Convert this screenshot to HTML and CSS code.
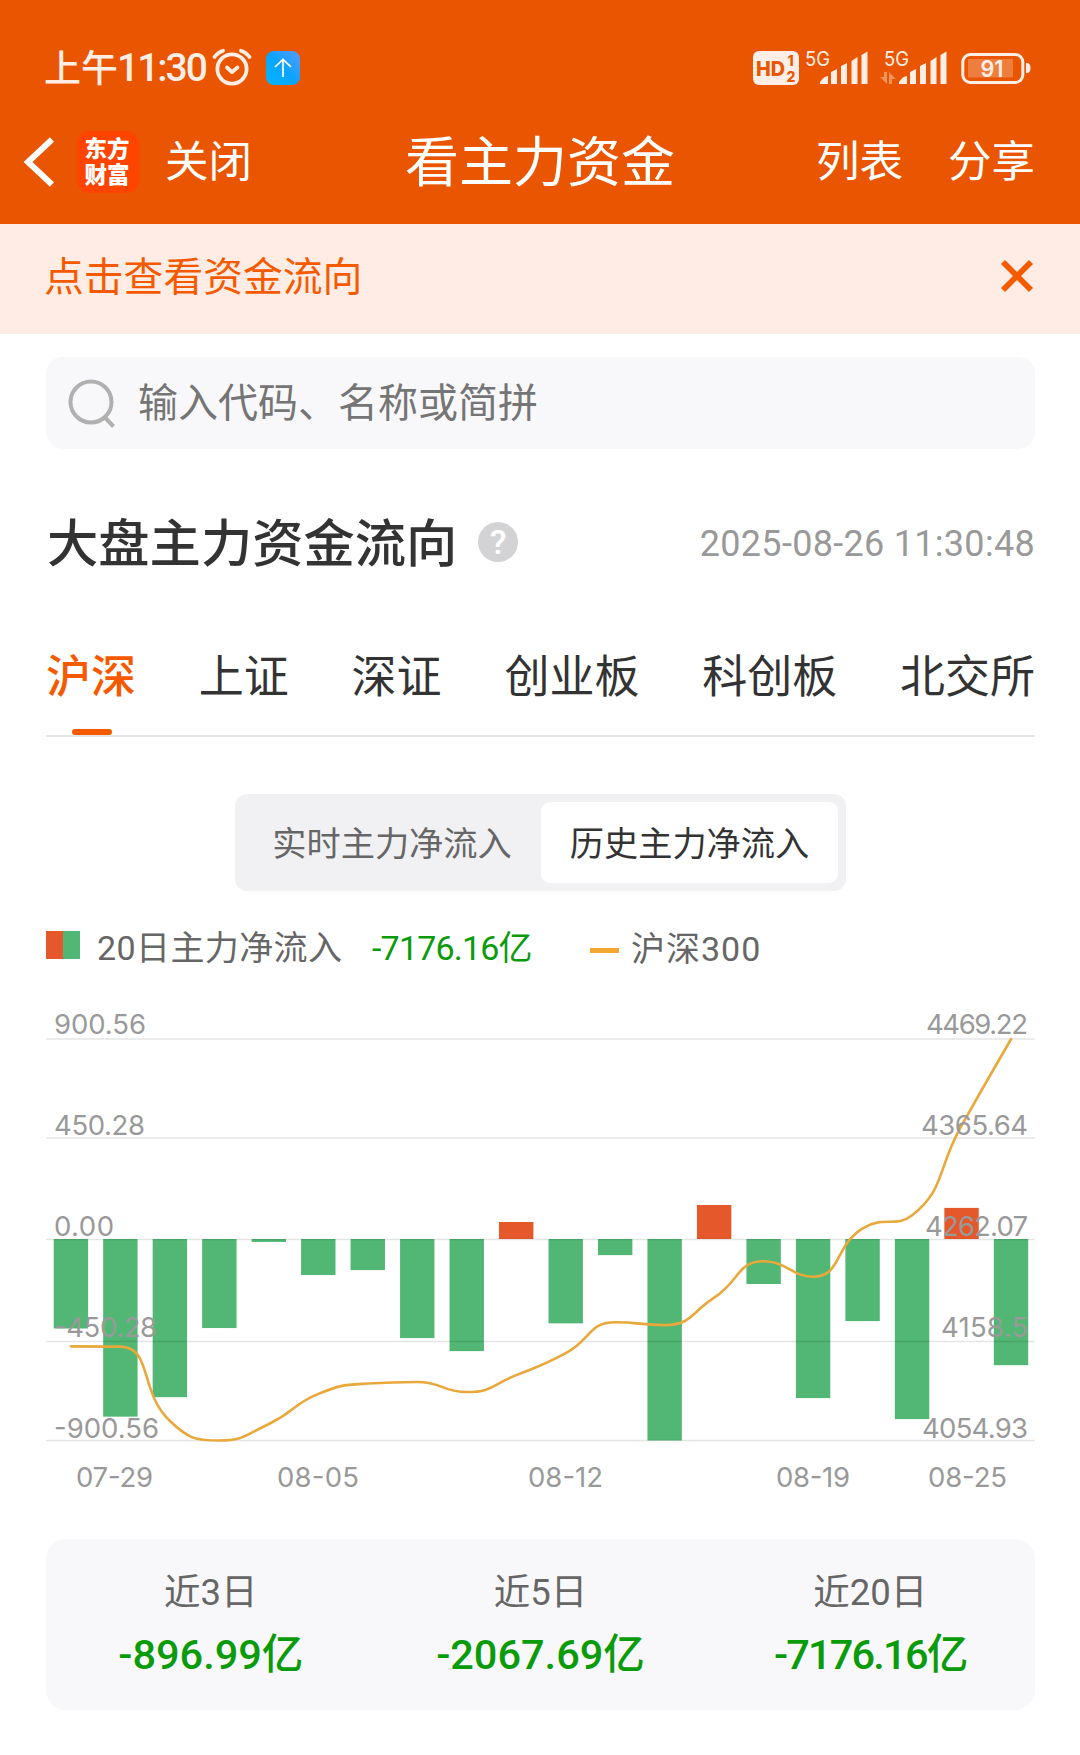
FILE: index.html
```html
<!DOCTYPE html>
<html lang="zh-CN">

<head>
  <meta charset="UTF-8" />
  <meta name="viewport" content="width=device-width, initial-scale=1.0" />
  <title>看主力资金</title>
  <link rel="stylesheet" href="styles.css">
</head>

<body>

  <!-- Header -->
  <header class="header">
    <div class="status-bar">
      <div class="status-left">
        <span class="status-day">上午</span><span class="status-time">11:30</span>
        <svg class="alarm" width="42" height="40" viewBox="0 0 42 40" fill="none" stroke="#ffeee5" stroke-width="3.8" stroke-linecap="round" stroke-linejoin="round">
          <circle cx="21" cy="22" r="14.6" />
          <path d="M3.5 10 Q7 5 12 3.8M38.5 10 Q35 5 30 3.8M16 20.5l5 4.6 5.5-4.6" />
        </svg>
        <svg class="upload" width="34" height="34" viewBox="0 0 34 34">
          <defs>
            <linearGradient id="blue" x1="0" y1="1" x2="1" y2="0">
              <stop offset="0" stop-color="#00b7ff" />
              <stop offset="0.5" stop-color="#0ba3ff" />
              <stop offset="1" stop-color="#5a9cff" />
            </linearGradient>
          </defs>
          <rect width="34" height="34" rx="8" fill="url(#blue)" />
          <path d="M17 26V8.5M9 16l8-7.5 8 7.5" fill="none" stroke="#fff" stroke-width="1.7" />
        </svg>
      </div>
      <svg class="status-icons" width="280" height="44" viewBox="0 -4 280 44" fill="#ffeee5">
        <rect x="1" y="1" width="46" height="34" rx="6" />
        <g fill="#e95500" font-weight="800">
          <text x="4" y="25.5" font-size="20.5" textLength="29" lengthAdjust="spacingAndGlyphs">HD</text>
          <text x="35.5" y="15.5" font-size="14">1</text>
          <text x="34.5" y="31.5" font-size="14" textLength="9.5">2</text>
        </g>
        <text x="53" y="16" font-size="20" textLength="25" lengthAdjust="spacingAndGlyphs">5G</text>
        <g id="signal">
          <path d="M68 34v-2q4-6 8-6v8zM79 34V22l6-3v15zM89 34V16l6-3v21zM99.5 34V11l6-4v27zM109.5 34V5l6-3.5V34z" />
        </g>
        <text x="132" y="16" font-size="20" textLength="25" lengthAdjust="spacingAndGlyphs">5G</text>
        <use href="#signal" x="79" />
        <path d="M128 27h4v-5h3v12zM137 34V22l7 7h-4v5z" opacity=".4" />
        <rect x="210.8" y="4.5" width="60" height="28" rx="7.5" fill="none" stroke="#ffeee5" stroke-width="3" />
        <rect x="216" y="9" width="45" height="18.5" rx="1" opacity=".27" />
        <path d="M274 13h2q2.5 1 2.5 5t-2.5 5h-2z" />
        <text x="228.5" y="26.5" font-size="22.5" font-weight="600" textLength="23" lengthAdjust="spacingAndGlyphs">91</text>
      </svg>
    </div>

    <nav class="navbar">
      <div class="nav-left">
        <svg class="back" width="32" height="52" viewBox="0 0 32 52" fill="none" stroke="#fff" stroke-width="6">
          <path d="M30 3.5 6 26l24 22.5" />
        </svg>
        <div class="logo"><span>东方</span><span>财富</span></div>
        <span class="nav-link">关闭</span>
      </div>
      <h1>看主力资金</h1>
      <div class="nav-right">
        <span class="nav-link">列表</span>
        <span class="nav-link">分享</span>
      </div>
    </nav>
  </header>

  <!-- Notice -->
  <div class="notice">
    <span>点击查看资金流向</span>
    <svg width="34" height="34" viewBox="0 0 34 34" stroke="#f65a00" stroke-width="5.8">
      <path d="M3 3l28 28M31 3L3 31" />
    </svg>
  </div>

  <main class="content">
    <!-- Search Bar -->
    <div class="search-bar">
      <svg width="48" height="50" viewBox="0 0 48 50" fill="none" stroke="#b0b0b0" stroke-width="4">
        <circle cx="23" cy="24" r="20.5" />
        <path d="M36.5 39l9 9.5" />
      </svg>
      <span>输入代码、名称或简拼</span>
    </div>

    <div class="section-title">
      <h2>大盘主力资金流向</h2>
      <span class="help">?</span>
      <time>2025-08-26 11:30:48</time>
    </div>

    <!-- Tabs -->
    <div class="tabs">
      <span class="tab active">沪深</span>
      <span class="tab">上证</span>
      <span class="tab">深证</span>
      <span class="tab">创业板</span>
      <span class="tab">科创板</span>
      <span class="tab">北交所</span>
    </div>

    <div class="switch">
      <span class="switch-item">实时主力净流入</span>
      <span class="switch-item active">历史主力净流入</span>
    </div>

    <div class="legend">
      <span class="swatch"></span>
      <span class="legend-name">20日主力净流入</span>
      <span class="legend-value">-7176.16亿</span>
      <span class="dash"></span>
      <span class="legend-index">沪深300</span>
    </div>

    <!-- Chart -->
    <svg class="chart" width="989" height="520" viewBox="46 0 989 520">
      <g id="bars"></g>
      <g class="grid">
        <path d="M46 49H1035M46 148H1035M46 249.5H1035M46 351.5H1035M46 450.5H1035" />
      </g>
      <path id="indexLine" class="index-line" />
      <g class="axis">
        <text x="54" y="44" textLength="92">900.56</text>
        <text x="54" y="145" textLength="91">450.28</text>
        <text x="54" y="246" textLength="60">0.00</text>
        <text x="54" y="347" textLength="103">-450.28</text>
        <text x="54" y="448" textLength="105">-900.56</text>
        <text x="926" y="44" textLength="102">4469.22</text>
        <text x="921" y="145" textLength="107">4365.64</text>
        <text x="925" y="246" textLength="103">4262.07</text>
        <text x="941" y="347" textLength="87">4158.5</text>
        <text x="922" y="448" textLength="106">4054.93</text>
        <text x="76" y="497" textLength="77">07-29</text>
        <text x="277" y="497" textLength="82">08-05</text>
        <text x="528" y="497" textLength="75">08-12</text>
        <text x="776" y="497" textLength="74">08-19</text>
        <text x="928" y="497" textLength="79">08-25</text>
      </g>
    </svg>

    <!-- Summary -->
    <div class="summary">
      <div class="summary-item"><span>近3日</span><strong>-896.99亿</strong></div>
      <div class="summary-item"><span>近5日</span><strong>-2067.69亿</strong></div>
      <div class="summary-item"><span>近20日</span><strong class="tight">-7176.16亿</strong></div>
    </div>
  </main>

  <script src="chart.js"></script>
</body>

</html>
```
FILE: styles.css
```css
* {
  box-sizing: border-box;
}

body {
  margin: 0;
  background: #fff;
  color: #333;
  font-family: Roboto, "Noto Sans CJK SC", sans-serif;
}

h1,
h2 {
  margin: 0;
  font-weight: 400;
}

span,
time,
h1,
h2 {
  white-space: nowrap;
}

svg {
  flex-shrink: 0;
}

/* Header */
.header {
  height: 224px;
  background: #e95500;
  color: #fff;
}

.status-bar {
  display: flex;
  justify-content: space-between;
  align-items: center;
  height: 114px;
  padding: 22px 48px 0 44px;
  color: #ffeee5;
}

.status-icons text {
  font-family: Inter, sans-serif;
}

.status-left {
  display: flex;
  align-items: center;
  font-size: 37px;
  font-weight: 500;
}

.status-day {
  padding-bottom: 4px;
}

.status-time {
  margin-left: -1px;
  font-size: 39px;
  letter-spacing: -2px;
}

.alarm {
  margin-left: 5px;
  margin-bottom: 3px;
}

.upload {
  margin-left: 13px;
  margin-bottom: 1px;
}

.navbar {
  display: flex;
  align-items: center;
  height: 96px;
  padding: 0 45px 0 22px;
}

.navbar h1 {
  padding-bottom: 7px;
  font-size: 54px;
}

.nav-left,
.nav-right {
  display: flex;
  align-items: center;
  flex: 1;
}

.nav-left {
  margin-right: 23px;
}

.nav-right {
  justify-content: flex-end;
  gap: 45px;
}

.nav-link {
  padding-bottom: 7px;
  font-size: 43.5px;
}

.logo {
  display: flex;
  flex-direction: column;
  justify-content: center;
  align-items: center;
  width: 62px;
  height: 62px;
  margin: 0 26px 0 23px;
  padding-right: 2px;
  border-radius: 13px;
  background: #ff4400;
  font-size: 22.5px;
  font-weight: 900;
  line-height: 26px;
}

/* Notice */
.notice {
  display: flex;
  justify-content: space-between;
  align-items: center;
  height: 110px;
  padding: 0 46px 7px 44px;
  background: #ffede5;
  color: #f65a00;
  font-size: 39.8px;
}

.notice span {
  padding-bottom: 5px;
}

.content {
  padding: 23px 45px 0 46px;
}

.search-bar {
  display: flex;
  align-items: center;
  height: 92px;
  padding-left: 22px;
  border-radius: 17px;
  background: #f8f8fa;
  color: #757575;
  font-size: 40px;
}

.search-bar span {
  margin-left: 22px;
  padding-bottom: 7px;
}

.section-title {
  display: flex;
  align-items: center;
  height: 80px;
  margin-top: 53px;
}

.section-title h2 {
  padding-left: 1px;
  padding-bottom: 6px;
  font-size: 51.3px;
  font-weight: 500;
}

.section-title time {
  margin-left: auto;
  padding-top: 3px;
  color: #999;
  font-size: 36px;
  letter-spacing: 0.3px;
}

.help {
  width: 40px;
  height: 40px;
  margin-left: 21px;
  border-radius: 50%;
  background: #d3d3d5;
  color: #fff;
  font-size: 34px;
  font-weight: 500;
  line-height: 41px;
  text-align: center;
}

/* Tabs */
.tabs {
  display: flex;
  justify-content: space-between;
  height: 118px;
  margin-top: 37px;
  border-bottom: 2px solid #e5e5e5;
}

.tab {
  height: 116px;
  font-size: 45px;
  line-height: 118px;
}

.tab.active {
  position: relative;
  color: #f65a00;
  font-weight: 500;
}

.tab.active::after {
  content: "";
  position: absolute;
  bottom: 0;
  left: 26px;
  width: 40px;
  height: 6px;
  border-radius: 3px;
  background: #f65a00;
}

.switch {
  display: grid;
  grid-template-columns: 298px 297px;
  width: 611px;
  height: 97px;
  margin: 57px auto 0;
  padding: 8px;
  border-radius: 12px;
  background: #f1f1f3;
}

.switch-item {
  height: 81px;
  border-radius: 9px;
  color: #666;
  font-size: 34.2px;
  line-height: 84px;
  text-align: center;
}

.switch-item.active {
  background: #fff;
  color: #333;
}

/* Legend */
.legend {
  display: flex;
  align-items: center;
  height: 60px;
  margin-top: 24px;
  color: #666;
  font-size: 34px;
}

.swatch {
  width: 34px;
  height: 28px;
  margin-right: 17px;
  background: linear-gradient(90deg, #e5582b 50%, #52b774 50%);
}

.legend-name {
  width: 246px;
  letter-spacing: 0.4px;
}

.legend-value {
  width: 160px;
  margin-left: 29px;
  color: #0a9b0a;
  letter-spacing: -0.8px;
}

.dash {
  width: 29px;
  height: 5px;
  margin: 10px 12px 0 58px;
  background: #f5a630;
}

.legend-index {
  padding-top: 2px;
  letter-spacing: 1px;
}

/* Chart */
.chart {
  display: block;
  margin-top: 15px;
}

.grid path {
  fill: none;
  stroke: #000;
  stroke-opacity: 0.1;
  stroke-width: 1.5;
}

.index-line {
  fill: none;
  stroke: #e9a83b;
  stroke-width: 2.6;
  stroke-linecap: round;
}

.axis text {
  fill: #999;
  font-family: Inter, sans-serif;
  font-size: 27.5px;
}

.summary {
  display: grid;
  grid-template-columns: repeat(3, 1fr);
  height: 171px;
  margin-top: 29px;
  border-radius: 20px;
  background: #f8f8fa;
}

.summary-item {
  display: flex;
  flex-direction: column;
  align-items: center;
  padding-top: 23px;
}

.summary-item span {
  color: #666;
  font-size: 36.5px;
  line-height: 62px;
}

.summary-item strong {
  color: #0a9b0a;
  font-size: 41.5px;
  font-weight: 500;
  line-height: 62px;
}

.summary-item .tight {
  letter-spacing: -1.8px;
}
```
FILE: chart.js
```js
const inflow = [-400, -794, -707, -398, -13, -161, -139, -443, -501, 76,
  -377, -72, -900.56, 152, -201, -711, -367, -805, 139, -564];

const csi300 = [4152.1, 4151.8, 4075, 4054.93, 4072, 4103, 4113.7, 4115.3, 4104.9, 4122.4,
  4145, 4177, 4174, 4202.3, 4239.9, 4223.9, 4273.9, 4287.3, 4380, 4469.22];

const zeroY = 249;
const step = 49.48;

// bars
document.getElementById('bars').innerHTML = inflow.map((v, i) => {
  const h = Math.abs(v) / 900.56 * 201.5;
  const y = v > 0 ? zeroY - h : zeroY;
  return `<rect x="${53.7 + i * step}" y="${y}" width="34.4" height="${h}" fill="${v > 0 ? '#e5582b' : '#52b774'}" />`;
}).join('');

// smooth index line
const pts = csi300.map((v, i) => [71 + i * step, 450.5 - (v - 4054.93) / (4469.22 - 4054.93) * 401.5]);

function clamp(v, a, b) {
  return Math.max(Math.min(a, b), Math.min(Math.max(a, b), v));
}

let d = `M${pts[0]}`;
let out = pts[0];
for (let i = 1; i < pts.length; i++) {
  const prev = pts[i - 1];
  const cur = pts[i];
  const next = pts[i + 1];
  let cpIn = cur;
  let cpOut = cur;
  if (next) {
    const lp = Math.hypot(cur[0] - prev[0], cur[1] - prev[1]);
    const ln = Math.hypot(next[0] - cur[0], next[1] - cur[1]);
    const r = ln / (ln + lp);
    cpOut = cur.map((c, k) => clamp(c + (next[k] - prev[k]) * 0.5 * r, c, next[k]));
    cpIn = cur.map((c, k) => clamp(c - (cpOut[k] - c) * lp / ln, prev[k], c));
    cpOut = cur.map((c, k) => c + (c - cpIn[k]) * ln / lp);
  }
  d += `C${out} ${cpIn} ${cur}`;
  out = cpOut;
}
document.getElementById('indexLine').setAttribute('d', d);
```
